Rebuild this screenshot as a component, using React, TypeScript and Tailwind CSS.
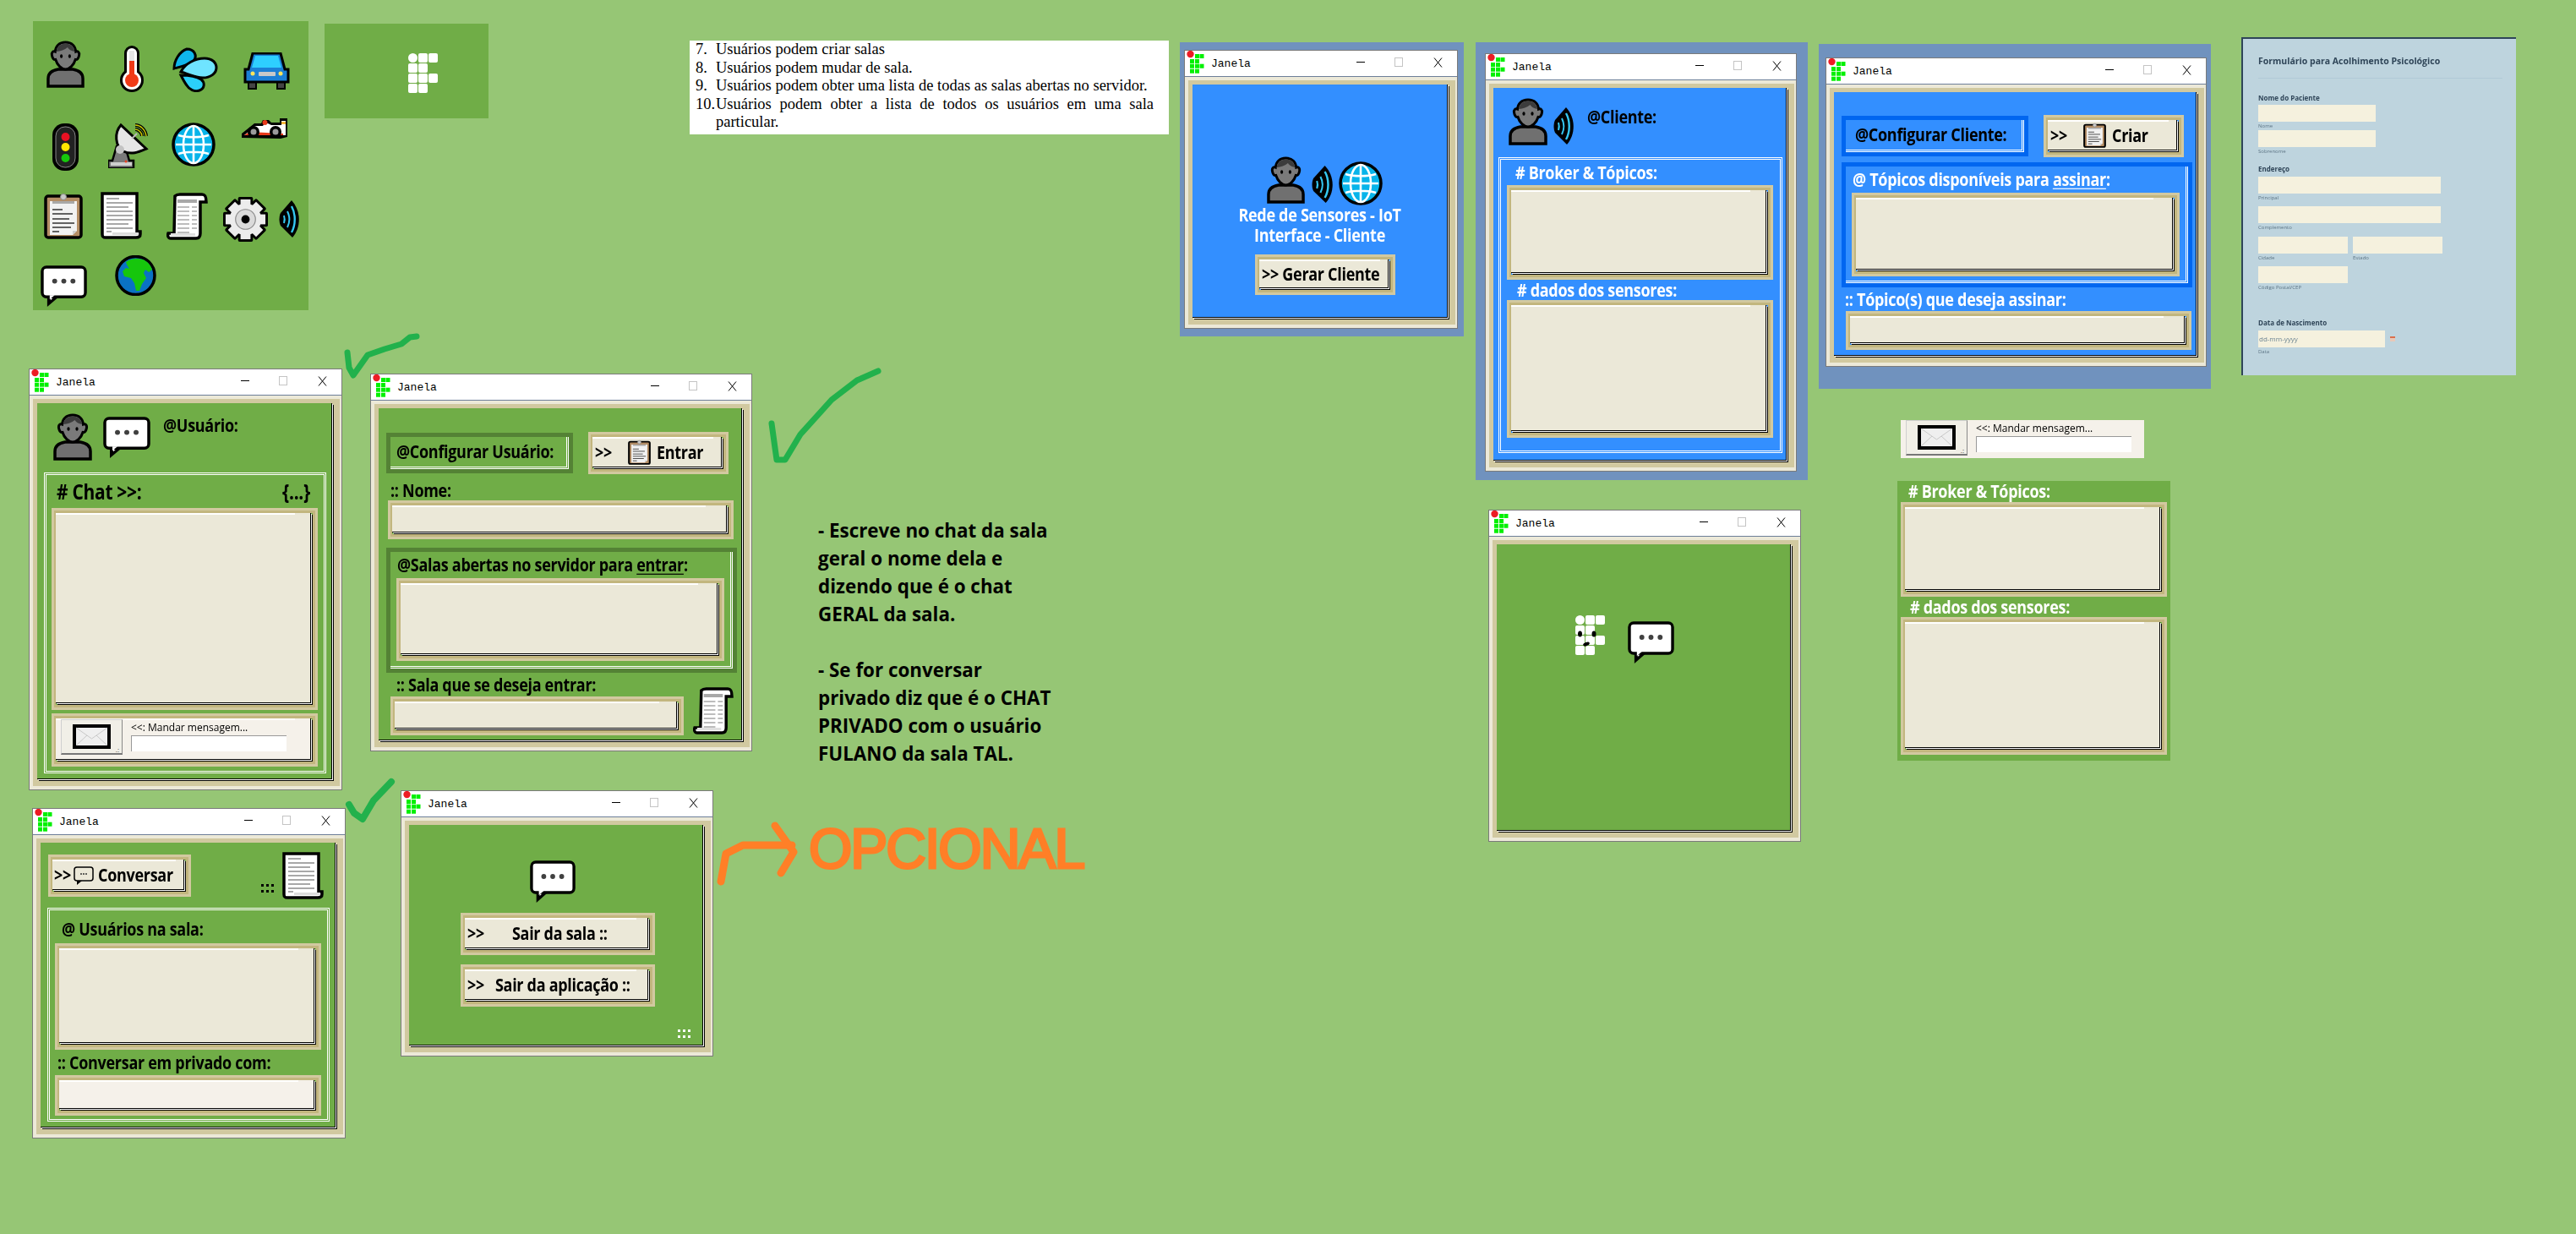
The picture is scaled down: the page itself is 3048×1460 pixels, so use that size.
import React from 'react';

const FONT = "font-['Open_Sans',sans-serif]";

type IconProps = { className?: string };

function Person({ className = '' }: IconProps) {
  return (
    <svg viewBox="0 0 46 56" preserveAspectRatio="none" className={`shrink-0 ${className}`}>
      <path d="M2 54 V45 C2 38 8 35 14 34 H32 C38 35 44 38 44 45 V54 Z" fill="#707070" stroke="#000" strokeWidth="3.5" />
      <path d="M23 2 C31 2 35 7 35.5 13 C38 12 40 14 39.5 17 C39 21 37 23 35 22.5 C33 29 28 34 23 34 C18 34 13 29 11 22.5 C9 23 7 21 6.5 17 C6 14 8 12 10.5 13 C11 7 15 2 23 2 Z" fill="#7a7a7a" stroke="#000" strokeWidth="3" />
      <path d="M12 13 C13 7 17 3.5 23 3.5 C29 3.5 33 7 34 13 C30 12.5 27 10.5 25.5 8 C22 11 17 12.5 12 13 Z" fill="#3c3c3c" />
      <ellipse cx="18" cy="18.5" rx="1.6" ry="2.3" fill="#000" />
      <ellipse cx="28" cy="18.5" rx="1.6" ry="2.3" fill="#000" />
    </svg>
  );
}

function Speech({ className = '' }: IconProps) {
  return (
    <svg viewBox="0 0 56 50" preserveAspectRatio="none" className={`shrink-0 ${className}`}>
      <path d="M8 34 V50 L22 38 Z" fill="#000" />
      <path d="M12 36 V42 L19 36 Z" fill="#fff" />
      <rect x="2" y="2" width="52" height="36" rx="5" fill="#fff" stroke="#000" strokeWidth="3.5" />
      <path d="M11 36 V41 L17 36 Z" fill="#fff" />
      <circle cx="17" cy="19" r="3" fill="#404040" />
      <circle cx="28" cy="19" r="3" fill="#404040" />
      <circle cx="39" cy="19" r="3" fill="#404040" />
    </svg>
  );
}

function Wireless({ className = '' }: IconProps) {
  return (
    <svg viewBox="0 0 25 44" preserveAspectRatio="none" className={`shrink-0 ${className}`}>
      <path d="M15 0 C26 12 27 31 16 44 L2 30 C0 26 0 19 2 15 Z" fill="#000" />
      <path d="M6 18 C7 21 7 24 6 27" fill="none" stroke="#35c8f2" strokeWidth="2" />
      <path d="M10 13 C13 19 13 26 10 32" fill="none" stroke="#35c8f2" strokeWidth="2" />
      <path d="M15 7 C20 16 20 29 15 38" fill="none" stroke="#35c8f2" strokeWidth="2.4" />
    </svg>
  );
}

function GlobeMesh({ className = '' }: IconProps) {
  return (
    <svg viewBox="0 0 52 52" preserveAspectRatio="none" className={`shrink-0 ${className}`}>
      <circle cx="26" cy="26" r="24" fill="#08b4ea" stroke="#000" strokeWidth="3.5" />
      <g fill="none" stroke="#fff" strokeWidth="2.6">
        <ellipse cx="26" cy="26" rx="12" ry="22" />
        <path d="M26 4 V48 M5 26 H47 M8 15 C18 18 34 18 44 15 M8 37 C18 34 34 34 44 37" />
      </g>
    </svg>
  );
}

function Clipboard({ className = '' }: IconProps) {
  return (
    <svg viewBox="0 0 46 56" preserveAspectRatio="none" className={`shrink-0 ${className}`}>
      <rect x="2" y="5" width="42" height="49" rx="3" fill="#b48d64" stroke="#000" strokeWidth="3.5" />
      <path d="M7 11 H39 V46 L34 51 H7 Z" fill="#f2f2f2" />
      <path d="M34 51 L39 46 H34 Z" fill="#cfcfcf" />
      <path d="M10 11 H36 V14 H10 Z" fill="#a9a9a9" />
      <circle cx="23" cy="6" r="3.5" fill="#c9c9c9" stroke="#8a8a8a" />
      <path d="M10 21 H22 M10 26 H34 M10 32 H30 M10 37 H36 M10 42 H32 M10 47 H18" stroke="#333" strokeWidth="1.5" />
    </svg>
  );
}

function PageIcon({ className = '' }: IconProps) {
  return (
    <svg viewBox="0 0 49 56" preserveAspectRatio="none" className={`shrink-0 ${className}`}>
      <path d="M2 2 H43 V47 H47 V50 C47 53 45 54 42 54 H6 C3 54 2 53 2 50 Z" fill="#fff" stroke="#000" strokeWidth="3.5" />
      <path d="M14 51 H45 V48 H14 Z" fill="#dcdcdc" />
      <path d="M7 8 H22 M7 13 H38 M7 18 H33 M7 23 H38 M7 28 H38 M7 33 H38 M7 38 H33 M7 43 H38 M7 47 H13" stroke="#a8a8a8" strokeWidth="1.8" />
    </svg>
  );
}

function ScrollIcon({ className = '' }: IconProps) {
  return (
    <svg viewBox="0 0 49 56" preserveAspectRatio="none" className={`shrink-0 ${className}`}>
      <path d="M10 4 C12 2 14 2 16 2 H42 C46 2 47 5 47 11 H40 V48 C40 52 38 54 35 54 H5 C2 54 1 51 2 48 H9 Z" fill="#fff" stroke="#000" strokeWidth="3.5" />
      <path d="M13 8 H36 V12 H13 Z" fill="#a8a8a8" />
      <path d="M13 17 H27 M30 17 H36 M13 22 H27 M30 22 H36 M13 27 H27 M30 27 H36 M13 32 H27 M30 32 H36 M13 37 H27 M30 37 H36 M13 42 H27 M30 42 H36 M13 47 H27" stroke="#a8a8a8" strokeWidth="1.6" />
      <path d="M5 51 H34 V48 H5 Z" fill="#e0e0e0" />
    </svg>
  );
}

function Gear({ className = '' }: IconProps) {
  const teeth = [0, 45, 90, 135, 180, 225, 270, 315];
  return (
    <svg viewBox="0 0 54 54" preserveAspectRatio="none" className={`shrink-0 ${className}`}>
      {teeth.map((a) => (
        <rect key={a} x="18" y="0" width="18" height="14" rx="2" fill="#000" transform={`rotate(${a} 27 27)`} />
      ))}
      <circle cx="27" cy="27" r="21" fill="#000" />
      {teeth.map((a) => (
        <rect key={`w${a}`} x="21" y="3" width="12" height="12" fill="#ececec" transform={`rotate(${a} 27 27)`} />
      ))}
      <circle cx="27" cy="27" r="19" fill="#ececec" />
      <circle cx="27" cy="27" r="12" fill="#dadada" stroke="#8a8a8a" strokeWidth="1.2" />
      <circle cx="27" cy="27" r="5" fill="#000" />
    </svg>
  );
}

function Thermometer({ className = '' }: IconProps) {
  return (
    <svg viewBox="0 0 28 55" preserveAspectRatio="none" className={`shrink-0 ${className}`}>
      <rect x="5" y="0" width="18" height="44" rx="9" fill="#000" />
      <circle cx="14" cy="41" r="14" fill="#000" />
      <rect x="8" y="3" width="12" height="38" rx="6" fill="#fff" />
      <circle cx="14" cy="41" r="11" fill="#fff" />
      <rect x="11" y="6" width="6" height="12" fill="#e4e4e4" />
      <rect x="11" y="18" width="6" height="22" fill="#f03a17" />
      <circle cx="14" cy="41" r="8" fill="#f03a17" />
    </svg>
  );
}

function Drops({ className = '' }: IconProps) {
  return (
    <svg viewBox="0 0 54 53" preserveAspectRatio="none" className={`shrink-0 ${className}`}>
      <g stroke="#000" strokeWidth="3">
        <path d="M17 2 C26 2 30 10 25 16 C20 21 10 23 2 25 C2 16 8 5 17 2 Z" fill="#0fb6ec" />
        <path d="M10 29 C15 19 27 13 38 13 C47 13 52 18 52 24 C52 31 45 36 36 36 C27 36 18 31 10 29 Z" fill="#6fe4ff" />
        <path d="M10 33 C18 33 28 34 34 38 C39 42 38 49 32 51 C26 53 20 50 17 45 C14 41 12 37 10 33 Z" fill="#2bd0fa" />
      </g>
    </svg>
  );
}

function Car({ className = '' }: IconProps) {
  return (
    <svg viewBox="0 0 55 44" preserveAspectRatio="none" className={`shrink-0 ${className}`}>
      <rect x="5" y="28" width="11" height="16" fill="#000" />
      <rect x="39" y="28" width="11" height="16" fill="#000" />
      <rect x="7" y="30" width="7" height="12" fill="#444" />
      <rect x="41" y="30" width="7" height="12" fill="#444" />
      <path d="M2 20 H6 L11 1 H44 L49 20 H53 V35 H2 Z" fill="#1b7fd6" stroke="#000" strokeWidth="3" />
      <path d="M14 4 H41 L45 18 H10 Z" fill="#2ecfff" />
      <rect x="18" y="23" width="20" height="5" rx="1" fill="#c8c8c8" />
      <circle cx="11" cy="25" r="2.5" fill="#ffe45c" />
      <circle cx="44" cy="25" r="2.5" fill="#ffe45c" />
    </svg>
  );
}

function TrafficLight({ className = '' }: IconProps) {
  return (
    <svg viewBox="0 0 31 56" preserveAspectRatio="none" className={`shrink-0 ${className}`}>
      <rect x="0" y="0" width="31" height="56" rx="14" fill="#000" />
      <rect x="4" y="4" width="23" height="48" rx="11" fill="#222" stroke="#888" />
      <circle cx="15.5" cy="16" r="5" fill="#e81123" />
      <circle cx="15.5" cy="28" r="5" fill="#ffe600" />
      <circle cx="15.5" cy="41" r="5" fill="#16c60c" />
    </svg>
  );
}

function Dish({ className = '' }: IconProps) {
  return (
    <svg viewBox="0 0 48 54" preserveAspectRatio="none" className={`shrink-0 ${className}`}>
      <path d="M0 54 V45 H5 L10 28 H20 L25 45 H30 V54 Z" fill="#7a7a7a" stroke="#000" strokeWidth="2.5" />
      <rect x="3" y="47" width="25" height="4" fill="#cfcfcf" />
      <circle cx="21" cy="46" r="1.5" fill="#e74022" />
      <path d="M15 3 C7 12 8 28 18 34 C28 39 38 34 45 31 Z" fill="#e6e6e6" stroke="#000" strokeWidth="3" />
      <circle cx="14" cy="32" r="5" fill="#c4c4c4" />
      <path d="M28 19 L34 13" stroke="#bbb" strokeWidth="2" />
      <path d="M32 3 C38 3 44 8 45 16 M32 8 C36 8 40 12 40 16" fill="none" stroke="#000" strokeWidth="4" />
      <path d="M32 3 C38 3 44 8 45 16 M32 8 C36 8 40 12 40 16" fill="none" stroke="#c8c800" strokeWidth="1.5" />
    </svg>
  );
}

function RaceCar({ className = '' }: IconProps) {
  return (
    <svg viewBox="0 0 56 28" preserveAspectRatio="none" className={`shrink-0 ${className}`}>
      <path d="M1 26 V21 L16 9 H24 L26 5 H33 L36 8 H46 V3 H55 V25 L47 27 Z" fill="#000" />
      <path d="M4 23 L17 12 H26 L28 9 H32 L36 11 H48 V6 H53 V23 Z" fill="#fff" />
      <path d="M4 23 L10 19 L50 21 V23 Z" fill="#e8391a" />
      <rect x="48" y="7" width="5" height="3" fill="#f6b73c" />
      <circle cx="28.5" cy="8" r="3" fill="#e8391a" />
      <circle cx="15" cy="19" r="7" fill="#000" />
      <circle cx="15" cy="19" r="3.5" fill="#9a9a9a" />
      <circle cx="41" cy="19" r="7" fill="#000" />
      <circle cx="41" cy="19" r="3.5" fill="#9a9a9a" />
    </svg>
  );
}

function Earth({ className = '' }: IconProps) {
  return (
    <svg viewBox="0 0 49 48" preserveAspectRatio="none" className={`shrink-0 ${className}`}>
      <circle cx="24.5" cy="24" r="22.5" fill="#0a72c4" stroke="#000" strokeWidth="3.5" />
      <path d="M13 8 C18 4 26 3 33 5 C38 7 42 11 44 17 L40 20 L36 17 L34 21 L37 27 L32 34 L29 42 L25 42 L23 33 L19 27 L11 25 L9 19 L13 15 L17 16 L14 11 Z" fill="#16c60c" />
    </svg>
  );
}

function Logo({ className = '', face = false }: IconProps & { face?: boolean }) {
  const cells = [
    [12, 0], [24, 0], [0, 12], [12, 12], [0, 24], [12, 24], [24, 24], [0, 36], [12, 36],
  ];
  return (
    <svg viewBox="0 0 35 47" className={`shrink-0 ${className}`}>
      <ellipse cx="5.5" cy="5.5" rx="5.5" ry="5.5" fill="#fff" />
      {cells.map(([x, y]) => (
        <rect key={`${x}-${y}`} x={x} y={y} width="11" height="11" rx="2" fill="#fff" />
      ))}
      {face && (
        <g fill="#000">
          <ellipse cx="5.5" cy="22" rx="2.5" ry="3.5" />
          <ellipse cx="22" cy="22" rx="2.5" ry="3.5" />
          <ellipse cx="13" cy="34" rx="4" ry="2" transform="rotate(-20 13 34)" />
        </g>
      )}
    </svg>
  );
}

function TitleLogo() {
  const cells = [
    [11, 4], [16.5, 4], [5, 10], [11, 10], [5, 15.7], [11, 15.7], [16.5, 15.7], [5, 21.7], [11, 21.7],
  ];
  return (
    <svg viewBox="0 0 28 30" className="w-[28px] h-[30px] shrink-0 ml-px">
      <circle cx="5.5" cy="4" r="4.2" fill="#ed1c24" />
      {cells.map(([x, y]) => (
        <rect key={`${x}-${y}`} x={x} y={y} width="5" height="5" fill="#00f000" />
      ))}
    </svg>
  );
}

function TitleBar() {
  return (
    <div className="flex items-center h-[31px] shrink-0 bg-white border-b border-[#6d7f99]">
      <TitleLogo />
      <span className="ml-[2px] mt-[1px] font-['Liberation_Mono',monospace] text-[13px] text-black">Janela</span>
      <div className="ml-auto flex items-center mr-[17px] -mt-[3px]">
        <div className="w-[10px] h-px bg-black" />
        <div className="ml-[35px] w-[10px] h-[11px] border border-[#c4c4c4]" />
        <svg viewBox="0 0 11 12" className="ml-[36px] w-[11px] h-[12px]">
          <path d="M1 0.5 L10 11.5 M10 0.5 L1 11.5" stroke="#000" strokeWidth="1" fill="none" />
        </svg>
      </div>
    </div>
  );
}

// window on the board: className gives place and size, bg the colour of the client area
function Janela({ className, bg, children }: { className: string; bg: string; children?: React.ReactNode }) {
  return (
    <div className={`absolute flex flex-col border border-[#7a7a7a] bg-[#ece9d8] ${className}`}>
      <TitleBar />
      <div className="flex-1 min-h-0 ml-[4px] mr-[2px] mt-[4px] mb-[4px] pl-[5px] pt-[5px] pr-[9px] pb-[8px] bg-[#d1c9a0]">
        <div className={`h-full border-r border-b border-black shadow-[1px_1px_0_#fff,2px_2px_0_#000] ${bg}`}>
          <div className="flex flex-col h-full">{children}</div>
        </div>
      </div>
    </div>
  );
}

// the double khaki frame with black and white inner lines, used for boxes and buttons
function Bevel({ className = '', light = false, children }: { className?: string; light?: boolean; children?: React.ReactNode }) {
  return (
    <div className={`shrink-0 border-[3px] border-[#d2c9a0] ${className}`}>
      <div className="h-full border-t-[3px] border-l-[2px] border-r-[3px] border-b-[3px] border-[#c2b67e] pr-[2px] pb-[2px]">
        <div className={`flex flex-col h-full border-r border-b border-black shadow-[1px_1px_0_#fff,2px_2px_0_#000] ${light ? 'bg-[#f5f1ea]' : 'bg-[#ebe8d8]'}`}>
          <div className="h-[2px] w-[94%] shrink-0 bg-white" />
          <div className="flex flex-1 min-h-0 items-center">{children}</div>
        </div>
      </div>
    </div>
  );
}

// the labels of the board are tall and narrow, the shots were stretched
function Txt({ className = '', children }: { className?: string; children: React.ReactNode }) {
  return <div className={`flex items-center shrink-0 whitespace-nowrap font-bold tracking-[-0.3px] scale-y-[1.2] ${FONT} ${className}`}>{children}</div>;
}

function GroupBox({ className = '', children }: { className?: string; children: React.ReactNode }) {
  return <div className={`shrink-0 border-[3px] border-double border-white ${className}`}>{children}</div>;
}

function DarkBox({ className = '', edge, children }: { className?: string; edge: string; children?: React.ReactNode }) {
  return (
    <div className={`shrink-0 border-[5px] ${edge} ${className}`}>
      <div className="h-full border-r-[3px] border-b-[3px] border-double border-white">{children}</div>
    </div>
  );
}

function Envelope() {
  return (
    <svg viewBox="0 0 45 29" preserveAspectRatio="none" className="w-[45px] h-[29px] shrink-0">
      <rect x="2" y="2" width="41" height="25" fill="#efefef" stroke="#000" strokeWidth="4" />
      <path d="M4 4 L22.5 17 L41 4 M4 25 L17 13 M41 25 L28 13" stroke="#c9c9c9" strokeWidth="1" fill="none" />
    </svg>
  );
}

function MsgRow() {
  return (
    <div className="flex items-stretch w-full h-full">
      <div className="relative flex items-center justify-center w-[73px] h-[42px] shrink-0 ml-[6px] -mt-[1px] bg-[#f1efe7] border border-[#cfcfcf] border-r-[#888] border-b-2 border-b-[#777]">
        <Envelope />
        <span className="absolute right-[3px] bottom-[0px] text-[8px] leading-none text-[#444]">.:</span>
      </div>
      <div className="flex flex-col ml-[10px] flex-1">
        <span className={`h-[18px] text-[12px] leading-[18px] text-black whitespace-nowrap scale-y-[1.1] origin-left ${FONT}`}>{'<<: Mandar mensagem...'}</span>
        <div className="w-[184px] h-[19px] bg-white border-t border-l border-[#999]" />
      </div>
    </div>
  );
}

function EntrarButton({ label, className = '' }: { label: string; className?: string }) {
  return (
    <Bevel className={`w-[166px] h-[50px] ${className}`}>
      <Txt className="ml-[3px] text-[18px] text-black">{'>>'}</Txt>
      <Clipboard className="ml-[19px] w-[27px] h-[30px] -mt-[2px]" />
      <Txt className="ml-[7px] text-[18px] text-black">{label}</Txt>
    </Bevel>
  );
}

const noteLines = [
  '- Escreve no chat da sala',
  'geral o nome dela e',
  'dizendo que é o chat',
  'GERAL da sala.',
  '',
  '- Se for conversar',
  'privado diz que é o CHAT',
  'PRIVADO com o usuário',
  'FULANO da sala TAL.',
];

function FormCaption({ children, className = '' }: { children: React.ReactNode; className?: string }) {
  return <div className={`h-[10px] text-[6px] leading-[10px] text-[#5e7686] ${className}`}>{children}</div>;
}

function FormInput({ className = '' }: { className?: string }) {
  return <div className={`h-[20px] bg-[#f5f1de] ${className}`} />;
}

function FormTitle({ children, className = '' }: { children: React.ReactNode; className?: string }) {
  return <div className={`h-[10px] text-[8px] leading-[10px] font-bold text-[#2f4558] ${className}`}>{children}</div>;
}

export default function App() {
  return (
    <div className={`relative w-[3048px] h-[1460px] overflow-hidden bg-[#96c675] ${FONT}`}>
      {/* icon sheet */}
      <div className="absolute left-[39px] top-[25px] w-[326px] h-[342px] bg-[#70ad47]">
        <Person className="absolute left-[16px] top-[23px] w-[45px] h-[56px]" />
        <Thermometer className="absolute left-[103px] top-[29px] w-[28px] h-[55px]" />
        <Drops className="absolute left-[165px] top-[31px] w-[54px] h-[53px]" />
        <Car className="absolute left-[249px] top-[37px] w-[55px] h-[44px]" />
        <TrafficLight className="absolute left-[23px] top-[121px] w-[31px] h-[56px]" />
        <Dish className="absolute left-[89px] top-[120px] w-[48px] h-[54px]" />
        <GlobeMesh className="absolute left-[164px] top-[120px] w-[52px] h-[52px]" />
        <RaceCar className="absolute left-[246px] top-[112px] w-[56px] h-[28px]" />
        <Clipboard className="absolute left-[13px] top-[202px] w-[46px] h-[56px]" />
        <PageIcon className="absolute left-[80px] top-[202px] w-[49px] h-[56px]" />
        <ScrollIcon className="absolute left-[158px] top-[203px] w-[49px] h-[56px]" />
        <Gear className="absolute left-[225px] top-[208px] w-[53px] h-[53px]" />
        <Wireless className="absolute left-[291px] top-[212px] w-[25px] h-[44px]" />
        <Speech className="absolute left-[9px] top-[289px] w-[55px] h-[49px]" />
        <Earth className="absolute left-[97px] top-[277px] w-[49px] h-[48px]" />
      </div>

      <div className="absolute left-[384px] top-[28px] w-[194px] h-[112px] flex items-center justify-center bg-[#70ad47]">
        <Logo className="w-[35px] h-[47px] ml-[38px] mt-[5px]" />
      </div>

      {/* requirements clipping */}
      <div className="absolute left-[816px] top-[48px] w-[567px] h-[111px] bg-white pl-[7px] pr-[18px] pt-[0px] font-['Liberation_Serif',serif] text-[18.5px] leading-[21.6px] text-black">
        <div className="flex"><span className="w-[24px] shrink-0">7.</span><span>Usuários podem criar salas</span></div>
        <div className="flex"><span className="w-[24px] shrink-0">8.</span><span>Usuários podem mudar de sala.</span></div>
        <div className="flex"><span className="w-[24px] shrink-0">9.</span><span>Usuários podem obter uma lista de todas as salas abertas no servidor.</span></div>
        <div className="flex"><span className="w-[24px] shrink-0">10.</span><span className="text-justify">Usuários podem obter a lista de todos os usuários em uma sala particular.</span></div>
      </div>

      {/* chat window */}
      <Janela className="left-[34px] top-[436px] w-[371px] h-[499px]" bg="bg-[#70ad47]">
        <div className="flex items-start pt-[12px] pl-[19px]">
          <Person className="w-[46px] h-[56px]" />
          <Speech className="ml-[13px] mt-[4px] w-[56px] h-[49px]" />
          <Txt className="ml-[15px] h-[28px] text-[18px]">@Usuário:</Txt>
        </div>
        <GroupBox className="ml-[8px] mt-[14px] w-[334px] h-[356px]">
          <div className="flex items-center justify-between h-[39px] pl-[12px] pr-[16px] pt-[3px]">
            <Txt className="text-[21px]">{'# Chat >>:'}</Txt>
            <Txt className="text-[21px]">{'{...}'}</Txt>
          </div>
          <Bevel className="ml-[6px] w-[315px] h-[239px]" />
          <Bevel light className="ml-[6px] mt-[4px] w-[315px] h-[63px]">
            <MsgRow />
          </Bevel>
        </GroupBox>
      </Janela>

      {/* user setup window */}
      <Janela className="left-[438px] top-[442px] w-[452px] h-[447px]" bg="bg-[#70ad47]">
        <div className="flex items-start mt-[28px] ml-[9px]">
          <DarkBox edge="border-[#548235]" className="mt-[1px] w-[221px] h-[48px]">
            <Txt className="h-full pl-[7px] text-[18px]">@Configurar Usuário:</Txt>
          </DarkBox>
          <EntrarButton label="Entrar" className="ml-[18px]" />
        </div>
        <Txt className="ml-[14px] mt-[7px] h-[24px] text-[18px]">:: Nome:</Txt>
        <Bevel className="ml-[11px] w-[409px] h-[46px]" />
        <DarkBox edge="border-[#548235]" className="ml-[9px] mt-[10px] w-[415px] h-[148px]">
          <Txt className="h-[31px] pl-[8px] text-[18px]">
            @Salas abertas no servidor para&nbsp;<span className="underline underline-offset-2">entrar</span>:
          </Txt>
          <Bevel className="ml-[7px] w-[388px] h-[98px]" />
        </DarkBox>
        <Txt className="ml-[21px] mt-[2px] h-[24px] text-[18px]">:: Sala que se deseja entrar:</Txt>
        <div className="flex items-start h-[46px] ml-[14px] mt-[2px]">
          <Bevel className="w-[347px] h-[46px]" />
          <ScrollIcon className="ml-[11px] -mt-[11px] w-[48px] h-[56px]" />
        </div>
      </Janela>

      {/* users in room */}
      <Janela className="left-[38px] top-[956px] w-[371px] h-[391px]" bg="bg-[#70ad47]">
        <div className="flex items-start h-[56px] mt-[11px] ml-[9px]">
          <Bevel className="mt-[3px] w-[169px] h-[50px]">
            <Txt className="ml-[2px] text-[18px]">{'>>'}</Txt>
            <svg viewBox="0 0 24 22" preserveAspectRatio="none" className="ml-[3px] w-[24px] h-[22px] shrink-0">
              <path d="M4 17 V22 L10 17 Z" fill="#000" />
              <rect x="1" y="1" width="22" height="16" rx="3" fill="#ebe8d8" stroke="#000" strokeWidth="1.5" />
              <path d="M8 9 H10 M11 9 H13 M14 9 H16" stroke="#333" strokeWidth="1.5" />
            </svg>
            <Txt className="ml-[5px] text-[18px]">Conversar</Txt>
          </Bevel>
          <div className="ml-[83px] mt-[38px] grid grid-cols-3 gap-x-[3px] gap-y-[4px]">
            {[0, 1, 2, 3, 4, 5].map((d) => (
              <div key={d} className="w-[3px] h-[3px] bg-black" />
            ))}
          </div>
          <PageIcon className="ml-[10px] w-[49px] h-[56px]" />
        </div>
        <GroupBox className="ml-[8px] mt-[10px] w-[334px] h-[253px]">
          <Txt className="h-[39px] pl-[14px] pt-[3px] text-[18px]">@ Usuários na sala:</Txt>
          <Bevel className="ml-[6px] w-[315px] h-[126px]" />
          <Txt className="h-[30px] pl-[9px] text-[18px]">:: Conversar em privado com:</Txt>
          <Bevel light className="ml-[6px] w-[315px] h-[48px]" />
        </GroupBox>
      </Janela>

      {/* exit window */}
      <Janela className="left-[474px] top-[935px] w-[370px] h-[315px]" bg="bg-[#70ad47]">
        <Speech className="ml-[143px] mt-[42px] w-[54px] h-[50px]" />
        <Bevel className="ml-[61px] mt-[12px] w-[230px] h-[50px]">
          <Txt className="ml-[3px] text-[18px]">{'>>'}</Txt>
          <Txt className="ml-[33px] text-[18px]">Sair da sala ::</Txt>
        </Bevel>
        <Bevel className="ml-[61px] mt-[11px] w-[230px] h-[50px]">
          <Txt className="ml-[3px] text-[18px]">{'>>'}</Txt>
          <Txt className="ml-[13px] text-[18px]">Sair da aplicação ::</Txt>
        </Bevel>
        <div className="ml-[318px] mt-[27px] w-[15px] grid grid-cols-3 gap-x-[3px] gap-y-[4px]">
          {[0, 1, 2, 3, 4, 5].map((d) => (
            <div key={d} className="w-[3px] h-[3px] bg-white" />
          ))}
        </div>
      </Janela>

      {/* IoT splash */}
      <div className="absolute left-[1396px] top-[50px] w-[336px] h-[348px] bg-[#7092be]" />
      <Janela className="left-[1401px] top-[59px] w-[324px] h-[330px]" bg="bg-[#338fff]">
        <div className="flex items-start ml-[88px] mt-[85px]">
          <Person className="w-[45px] h-[56px]" />
          <Wireless className="ml-[8px] mt-[11px] w-[26px] h-[44px]" />
          <GlobeMesh className="ml-[6px] mt-[6px] w-[52px] h-[52px]" />
        </div>
        <div className="-mt-[1px] flex flex-col items-center text-white">
          <Txt className="h-[24px] text-[18px]">Rede de Sensores - IoT</Txt>
          <Txt className="h-[24px] text-[18px]">Interface - Cliente</Txt>
        </div>
        <Bevel className="ml-[74px] mt-[11px] w-[166px] h-[48px]">
          <Txt className="ml-[3px] text-[18px]">{'>> Gerar Cliente'}</Txt>
        </Bevel>
      </Janela>

      {/* client window */}
      <div className="absolute left-[1746px] top-[50px] w-[393px] h-[518px] bg-[#7092be]" />
      <Janela className="left-[1757px] top-[63px] w-[369px] h-[495px]" bg="bg-[#338fff]">
        <div className="flex items-start pt-[12px] pl-[18px]">
          <Person className="w-[46px] h-[56px]" />
          <Wireless className="ml-[7px] mt-[11px] w-[25px] h-[44px]" />
          <Txt className="ml-[15px] mt-[8px] h-[28px] text-[18px]">@Cliente:</Txt>
        </div>
        <GroupBox className="ml-[6px] mt-[14px] w-[336px] h-[350px]">
          <Txt className="h-[30px] pl-[17px] text-[18px] text-white">{'# Broker & Tópicos:'}</Txt>
          <Bevel className="ml-[7px] w-[315px] h-[112px]" />
          <Txt className="h-[24px] pl-[19px] text-[18px] text-white"># dados dos sensores:</Txt>
          <Bevel className="ml-[7px] w-[315px] h-[163px]" />
        </GroupBox>
      </Janela>

      {/* client setup window */}
      <div className="absolute left-[2152px] top-[52px] w-[464px] h-[408px] bg-[#7092be]" />
      <Janela className="left-[2160px] top-[68px] w-[451px] h-[366px]" bg="bg-[#338fff]">
        <div className="flex items-start mt-[27px] ml-[9px]">
          <DarkBox edge="border-[#0066f0]" className="mt-[1px] w-[221px] h-[48px]">
            <Txt className="h-full pl-[11px] text-[18px]">@Configurar Cliente:</Txt>
          </DarkBox>
          <EntrarButton label="Criar" className="ml-[18px]" />
        </div>
        <DarkBox edge="border-[#0066f0]" className="ml-[9px] mt-[6px] w-[415px] h-[148px]">
          <Txt className="h-[31px] pl-[8px] text-[18px] text-white">
            @ Tópicos disponíveis para&nbsp;<span className="underline underline-offset-2">assinar</span>:
          </Txt>
          <Bevel className="ml-[7px] w-[388px] h-[99px]" />
        </DarkBox>
        <Txt className="ml-[13px] mt-[2px] h-[24px] text-[18px] text-white">:: Tópico(s) que deseja assinar:</Txt>
        <Bevel className="ml-[14px] mt-[2px] w-[409px] h-[46px]" />
      </Janela>

      {/* loose pieces */}
      <div className="absolute left-[2249px] top-[497px] w-[288px] h-[45px] bg-[#f5f1ea] pt-[1px]">
        <MsgRow />
      </div>

      <div className="absolute left-[2245px] top-[569px] w-[323px] h-[331px] flex flex-col bg-[#70ad47] text-white">
        <Txt className="h-[25px] pl-[13px] text-[18px]">{'# Broker & Tópicos:'}</Txt>
        <Bevel className="ml-[4px] w-[315px] h-[112px]" />
        <Txt className="h-[24px] pl-[15px] text-[18px]"># dados dos sensores:</Txt>
        <Bevel className="ml-[4px] w-[315px] h-[163px]" />
      </div>

      {/* splash window */}
      <Janela className="left-[1761px] top-[603px] w-[370px] h-[393px]" bg="bg-[#70ad47]">
        <div className="flex items-start ml-[93px] mt-[84px]">
          <Logo face className="w-[35px] h-[47px]" />
          <Speech className="ml-[27px] mt-[7px] w-[55px] h-[50px]" />
        </div>
      </Janela>

      {/* form screenshot */}
      <div className="absolute left-[2652px] top-[44px] w-[325px] h-[400px] pl-[18px] border-t-2 border-l-2 border-[#2f4558] bg-[#bed4de] blur-[0.3px]">
        <div className="mt-[18px] h-[16px] text-[10.5px] leading-[16px] font-bold text-[#2f4558]">Formulário para Acolhimento Psicológico</div>
        <div className="mt-[12px] w-[289px] h-px bg-[#b1cad6]" />
        <FormTitle className="mt-[18px]">Nome do Paciente</FormTitle>
        <FormInput className="mt-[3px] w-[139px]" />
        <FormCaption>Nome</FormCaption>
        <FormInput className="w-[139px]" />
        <FormCaption>Sobrenome</FormCaption>
        <FormTitle className="mt-[11px]">Endereço</FormTitle>
        <FormInput className="mt-[4px] w-[216px]" />
        <FormCaption>Principal</FormCaption>
        <FormInput className="mt-[5px] w-[216px]" />
        <FormCaption>Complemento</FormCaption>
        <div className="mt-[6px] flex gap-[6px]">
          <div className="w-[106px]">
            <FormInput />
            <FormCaption>Cidade</FormCaption>
          </div>
          <div className="w-[106px]">
            <FormInput />
            <FormCaption>Estado</FormCaption>
          </div>
        </div>
        <FormInput className="mt-[5px] w-[106px]" />
        <FormCaption>Código Postal/CEP</FormCaption>
        <FormTitle className="mt-[32px]">Data de Nascimento</FormTitle>
        <div className="mt-[4px] flex items-center">
          <div className="w-[150px] h-[20px] pl-[1px] bg-[#f5f1de] text-[8px] leading-[20px] text-[#6d8593]">dd-mm-yyyy</div>
          <div className="ml-[6px] w-[6px] h-[6px] bg-[#e8c8b8] border-t-2 border-[#d9704e]" />
        </div>
        <FormCaption>Data</FormCaption>
      </div>

      {/* notes */}
      <div className="absolute left-[968px] top-[611px] text-[22.4px] leading-[33px] font-bold text-black whitespace-pre">
        {noteLines.map((line, i) => (
          <div key={i} className="h-[33px]">{line}</div>
        ))}
      </div>

      {/* marker strokes */}
      <svg viewBox="0 0 3048 1460" className="absolute inset-0 w-[3048px] h-[1460px] pointer-events-none">
        <g fill="none" strokeLinecap="round" strokeLinejoin="round">
          <polyline points="411,417 413,435 418,444 435,420 455,413 475,407 485,399 493,398" stroke="#22b14c" strokeWidth="7" />
          <polyline points="913,501 917,530 919,544 929,544 947,514 984,473 1014,450 1039,439" stroke="#22b14c" strokeWidth="7" />
          <polyline points="413,952 419,962 429,969 442,947 463,925" stroke="#22b14c" strokeWidth="8" />
          <polyline points="853,1043 859,1010 879,1000 937,1000" stroke="#ff7f27" strokeWidth="9" />
          <polyline points="917,977 939,1008 924,1033" stroke="#ff7f27" strokeWidth="9" />
        </g>
      </svg>
      <div className="absolute left-[957px] top-[969px] h-[70px] flex items-center font-['Liberation_Sans',sans-serif] text-[66px] leading-none tracking-[-2px] text-[#ff7f27] [-webkit-text-stroke:3px_#ff7f27]">
        OPCIONAL
      </div>
    </div>
  );
}
